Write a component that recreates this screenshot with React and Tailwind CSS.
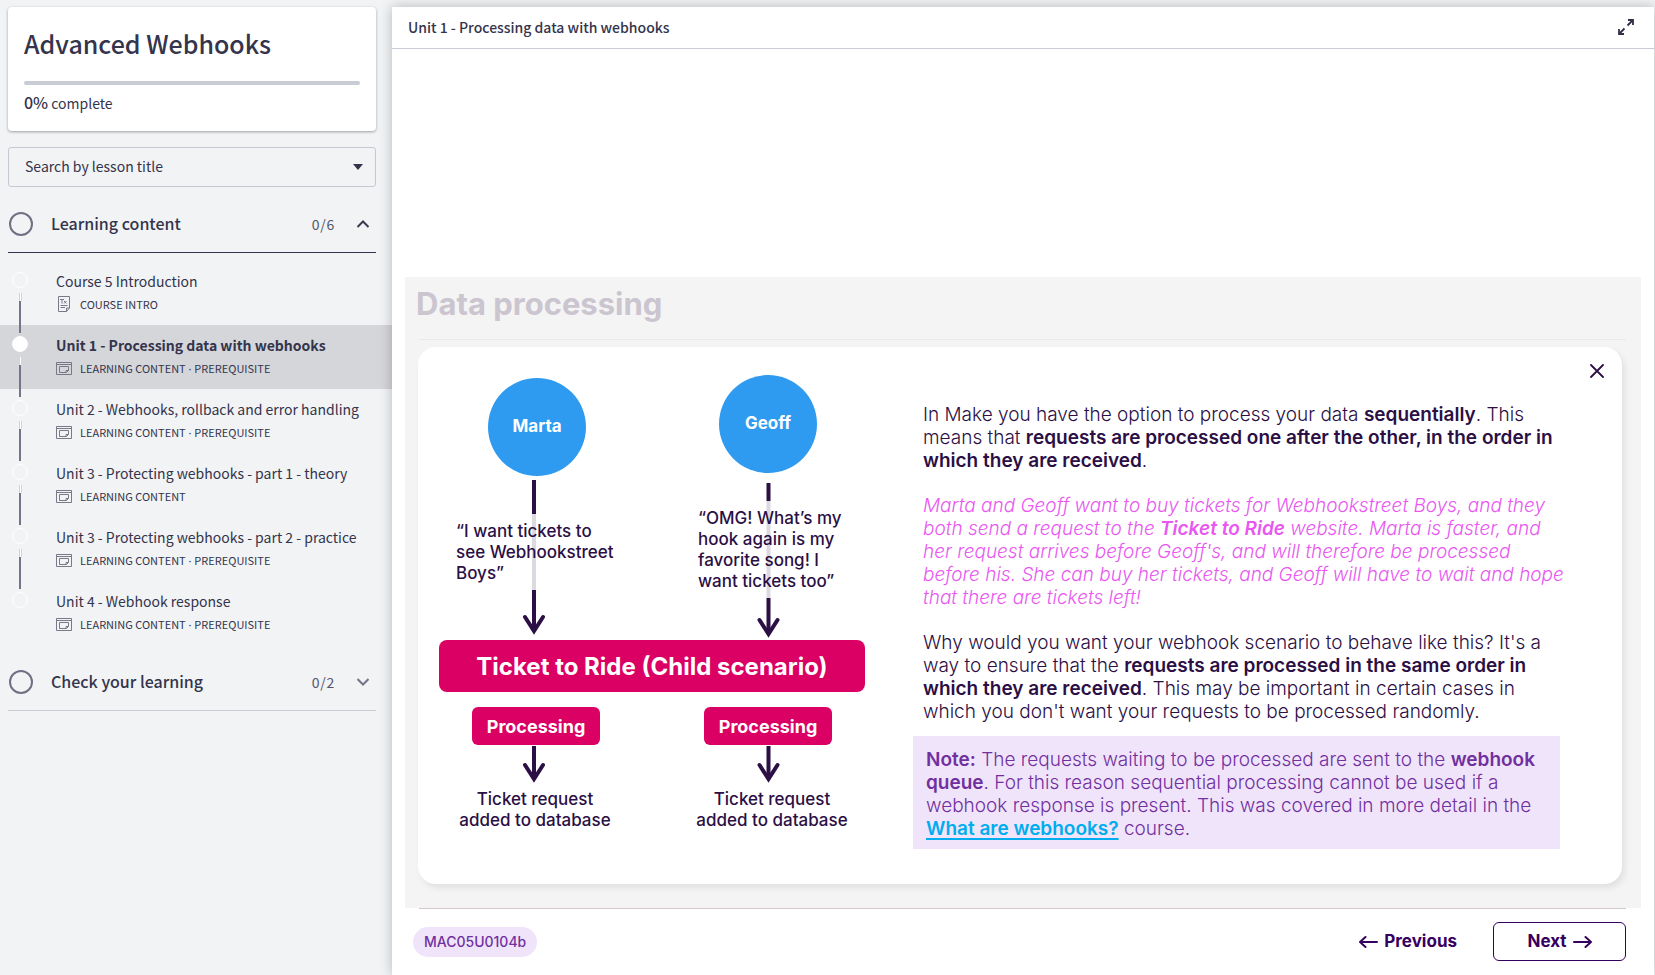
import React from "react";

const LESSONS = [
  { title: "Course 5 Introduction", meta: ["COURSE INTRO"], kind: "text" },
  { title: "Unit 1 - Processing data with webhooks", meta: ["LEARNING CONTENT", "PREREQUISITE"], active: true },
  { title: "Unit 2 - Webhooks, rollback and error handling", meta: ["LEARNING CONTENT", "PREREQUISITE"] },
  { title: "Unit 3 - Protecting webhooks - part 1 - theory", meta: ["LEARNING CONTENT"] },
  { title: "Unit 3 - Protecting webhooks - part 2 - practice", meta: ["LEARNING CONTENT", "PREREQUISITE"] },
  { title: "Unit 4 - Webhook response", meta: ["LEARNING CONTENT", "PREREQUISITE"] },
];

function TextIcon() {
  return (
    <svg width="16" height="16" viewBox="0 0 16 16" fill="none" stroke="#777989" aria-hidden="true">
      <path d="M2.5 .5H13.5V12L10.5 15.5H2.5ZM13.5 12H10.5V15.5" />
      <path d="M4 3.500H8M6 3.500V7.500M8 5L10.500 7.500M10.500 5L8 7.500M4.500 9.500H11.500M4.500 11.500H9" />
    </svg>
  );
}

function WindowIcon() {
  return (
    <svg width="16" height="13" viewBox="0 0 16 13" fill="none" stroke="#777989" aria-hidden="true">
      <path d="M.5 .5H15.5V12.5H.5ZM.5 2.5H15.5" />
      <path d="M3.500 4.500H12.500V8.500L10.500 10.500H3.500ZM12.500 8.500H10V10.500" />
    </svg>
  );
}

function Lesson({ lesson, last }) {
  return (
    <li className={lesson.active ? "bg-[#d5d6da]" : ""}>
      <a href="#lesson" className="flex h-16 items-start pl-3" aria-current={lesson.active ? "page" : undefined}>
        <span className="relative z-10 flex w-4 shrink-0 flex-col items-center pt-[11px]">
          <span className={`size-4 shrink-0 rounded-full border border-white ${lesson.active ? "bg-white" : ""}`} />
          {!last && (
            <>
              <span className="mt-[5px] h-2 w-[3px] border-x border-[#d3d4da] bg-white" />
              <span className="h-8 w-[2px] bg-[#74758a]" />
            </>
          )}
        </span>
        <span className="flex flex-col gap-1 pt-[9px] pl-7">
          <span className={`text-[14px] leading-[22px] whitespace-nowrap ${lesson.active ? "font-bold" : ""}`}>{lesson.title}</span>
          <span className="flex h-4 items-center gap-2">
            <span className="flex w-4 justify-center">{lesson.kind === "text" ? <TextIcon /> : <WindowIcon />}</span>
            <span className="text-[11px] leading-4 whitespace-nowrap">
              {lesson.meta[0]}
              {lesson.meta[1] && (
                <>
                  <span className="font-['Noto_Sans',sans-serif]"> · </span>
                  {lesson.meta[1]}
                </>
              )}
            </span>
          </span>
        </span>
      </a>
    </li>
  );
}

function SectionHeader({ title, count, open }) {
  return (
    <button
      type="button"
      aria-expanded={open}
      className={`ml-2 mr-4 flex items-center border-b pt-[25px] pb-4 text-left ${open ? "border-[#33324c]" : "border-[#c9cbd5]"}`}
    >
      <span className="ml-px size-6 rounded-full border-2 border-[#6f7083]" />
      <span className="flex-1 pb-[2px] pl-[18px] text-[16px] leading-[22px] font-medium">{title}</span>
      <span className="pr-[22px] text-[14px] leading-6 tracking-wider text-[#55566a]">{count}</span>
      <svg width="12" height="8" viewBox="0 0 12 8" fill="none" stroke={open ? "#3a3a50" : "#74758a"} strokeWidth="2" className="mr-[7px]" aria-hidden="true">
        <path d={open ? "M.5 7 6 1.5 11.5 7" : "M.5 1 6 6.5 11.5 1"} />
      </svg>
    </button>
  );
}

function Sidebar() {
  return (
    <aside className="flex w-[392px] shrink-0 flex-col pt-[7px]">
      <div className="mr-4 ml-2 rounded-[4px] bg-white px-4 pt-[18px] pb-4 shadow-[0_1px_3px_rgba(0,0,0,0.35)]">
        <h1 className="text-[25px] leading-9 font-medium">Advanced Webhooks</h1>
        <div className="mt-5 h-1 rounded-full bg-[#c9cbd5]" role="progressbar" aria-label="Course progress" aria-valuenow={0} aria-valuemin={0} aria-valuemax={100} />
        <p className="mt-[5px] text-[14px] leading-6">
          <span className="text-[16px] leading-6 font-medium">0%</span> complete
        </p>
      </div>
      <div className="relative mt-4 mr-4 ml-2">
        <select aria-label="Search by lesson title" className="block h-10 w-full appearance-none rounded-[3px] border border-[#c6c8d3] bg-transparent px-4 pb-[2px] text-[14px]">
          <option>Search by lesson title</option>
        </select>
        <svg width="10" height="6" viewBox="0 0 10 6" className="pointer-events-none absolute top-[17px] right-[13px]" aria-hidden="true">
          <path d="M0 0H10L5 6Z" fill="#33334b" />
        </svg>
      </div>
      <SectionHeader title="Learning content" count="0/6" open />
      <ul className="pt-2">
        {LESSONS.map((lesson, i) => (
          <Lesson key={lesson.title} lesson={lesson} last={i === LESSONS.length - 1} />
        ))}
      </ul>
      <SectionHeader title="Check your learning" count="0/2" open={false} />
    </aside>
  );
}

function Diagram() {
  return (
    <div className="relative h-[502px] w-[426px] shrink-0 font-medium">
      <svg width="426" height="502" viewBox="0 0 426 502" fill="none" stroke="#2b0f45" strokeWidth="4" className="absolute inset-0" aria-hidden="true">
        <path d="M95 167V243M329.500 154V251" stroke="#ddd9e1" />
        <path d="M95 133V167M95 243V284M329.500 136V154M329.500 251V287M95 399V432M329.500 399V432" />
        <path d="M86 270 95 284 104 270M320.500 273 329.500 287 338.500 273M86 418 95 432 104 418M320.500 418 329.500 432 338.500 418" strokeLinecap="round" />
      </svg>
      <div className="absolute top-[31px] left-[49px] flex size-[98px] items-center justify-center rounded-full bg-[#2e9bf0] text-[17px] font-bold text-white">Marta</div>
      <div className="absolute top-7 left-[280px] flex size-[98px] items-center justify-center rounded-full bg-[#2e9bf0] text-[17px] font-bold text-white">Geoff</div>
      <p className="absolute top-[174px] left-[17px] text-[17px] leading-[21px] whitespace-nowrap">
        “I want tickets to<br />see Webhookstreet<br />Boys”
      </p>
      <p className="absolute top-[161px] left-[259px] text-[17px] leading-[21px] whitespace-nowrap">
        “OMG! What’s my<br />hook again is my<br />favorite song! I<br />want tickets too”
      </p>
      <div className="absolute top-[293px] left-0 flex h-[52px] w-full items-center justify-center rounded-lg bg-[#db0063] pt-[2px] text-[24px] font-bold whitespace-nowrap text-white">
        Ticket to Ride (Child scenario)
      </div>
      <div className="absolute top-[360px] left-[33px] flex h-[38px] w-32 items-center justify-center rounded-md bg-[#db0063] text-[18px] font-bold text-white">Processing</div>
      <div className="absolute top-[360px] left-[265px] flex h-[38px] w-32 items-center justify-center rounded-md bg-[#db0063] text-[18px] font-bold text-white">Processing</div>
      <p className="absolute top-[442px] left-[16px] w-40 text-center text-[17px] leading-[21px] whitespace-nowrap">
        Ticket request<br />added to database
      </p>
      <p className="absolute top-[442px] left-[253px] w-40 text-center text-[17px] leading-[21px] whitespace-nowrap">
        Ticket request<br />added to database
      </p>
    </div>
  );
}

function Explanation() {
  return (
    <div className="max-w-[647px] flex-1 pt-14 text-[19px] leading-[23px] font-light whitespace-nowrap [&_strong]:font-semibold">
      <div className="flex flex-col gap-[22px] pl-[10px]">
        <p>
          In Make you have the option to process your data <strong>sequentially</strong>. This<br />
          means that <strong>requests are processed one after the other, in the order in<br />
          which they are received</strong>.
        </p>
        <p className="text-[#e858f0] italic">
          Marta and Geoff want to buy tickets for Webhookstreet Boys, and they<br />
          both send a request to the <strong>Ticket to Ride</strong> website. Marta is faster, and<br />
          her request arrives before Geoff's, and will therefore be processed<br />
          before his. She can buy her tickets, and Geoff will have to wait and hope<br />
          that there are tickets left!
        </p>
        <p>
          Why would you want your webhook scenario to behave like this? It's a<br />
          way to ensure that the <strong>requests are processed in the same order in<br />
          which they are received</strong>. This may be important in certain cases in<br />
          which you don't want your requests to be processed randomly.
        </p>
      </div>
      <p className="mt-[13px] bg-[#f0e4fa] px-[13px] pt-3 pb-[9px] text-[#7030a0]">
        <strong>Note:</strong> The requests waiting to be processed are sent to the <strong>webhook<br />
        queue</strong>. For this reason sequential processing cannot be used if a<br />
        webhook response is present. This was covered in more detail in the<br />
        <a href="#webhooks" className="font-semibold text-[#00adef] underline decoration-2 underline-offset-[3px]">What are webhooks?</a> course.
      </p>
    </div>
  );
}

function Slide() {
  return (
    <section className="mx-[13px] bg-[#f4f4f4] pb-6 font-['Inter',sans-serif] text-[#2b0f45]">
      <h2 className="px-[11px] pt-[7px] pb-[15px] text-[31px] leading-10 font-bold text-[#cbc5d0]">Data processing</h2>
      <hr className="mr-[15px] ml-[14px] border-[#e9e9e9]" />
      <div className="relative mt-[7px] mr-[19px] ml-[13px] flex gap-12 rounded-[18px] bg-white pr-[61px] pb-[35px] pl-[21px] shadow-[3px_4px_6px_rgba(0,0,0,0.08)]">
        <Diagram />
        <Explanation />
        <button type="button" aria-label="Close" className="absolute top-3 right-[13px] flex size-6 items-center justify-center">
          <svg width="14" height="14" viewBox="0 0 14 14" stroke="#2b0f45" strokeWidth="1.8" strokeLinecap="round" aria-hidden="true">
            <path d="M1 1 13 13M13 1 1 13" />
          </svg>
        </button>
      </div>
    </section>
  );
}

export default function App() {
  return (
    <div className="flex min-h-screen bg-[#f1f3f5] font-['Noto_Sans_CJK_SC',sans-serif] text-[#34344c]">
      <Sidebar />
      <main className="relative z-20 mt-[7px] mr-px flex flex-1 flex-col bg-white shadow-[0_0_12px_rgba(0,0,0,0.25)]">
        <header className="flex h-[42px] items-center justify-between border-b border-[#c9cbd8] pr-5 pb-[2px] pl-4">
          <h2 className="text-[14px] leading-6 font-medium">Unit 1 - Processing data with webhooks</h2>
          <button type="button" aria-label="Full screen">
            <svg width="16" height="16" viewBox="0 0 16 16" fill="none" stroke="#2f3048" strokeWidth="1.8" aria-hidden="true">
              <path d="M10 1H15V6M15 1 9.500 6.500M6 15H1V10M1 15 6.500 9.500" />
            </svg>
          </button>
        </header>
        <div className="flex flex-1 flex-col justify-end">
          <Slide />
          <footer className="mr-7 ml-[21px] font-['Inter',sans-serif] text-[#360060]">
            <hr className="ml-[6px] border-[#d3c8c8]" />
            <div className="flex items-center pt-[13px] pb-[14px]">
              <span className="rounded-full bg-[#f0e4fa] px-[11px] py-[5px] text-[14px] leading-5 font-medium text-[#7030a0]">MAC05U0104b</span>
              <button type="button" className="mr-9 ml-auto flex items-center gap-[6px] text-[17px] font-bold">
                <svg width="19" height="14" viewBox="0 0 19 14" fill="none" stroke="currentColor" strokeWidth="2" strokeLinecap="round" strokeLinejoin="round" aria-hidden="true">
                  <path d="M18 7H1M6.500 2 1 7 6.500 12" />
                </svg>
                Previous
              </button>
              <button type="button" className="flex h-[39px] w-[133px] items-center justify-center gap-[6px] rounded-md border border-[#360060] text-[17px] font-bold">
                Next
                <svg width="19" height="14" viewBox="0 0 19 14" fill="none" stroke="currentColor" strokeWidth="2" strokeLinecap="round" strokeLinejoin="round" aria-hidden="true">
                  <path d="M1 7H18M12.500 2 18 7 12.500 12" />
                </svg>
              </button>
            </div>
          </footer>
        </div>
      </main>
    </div>
  );
}
